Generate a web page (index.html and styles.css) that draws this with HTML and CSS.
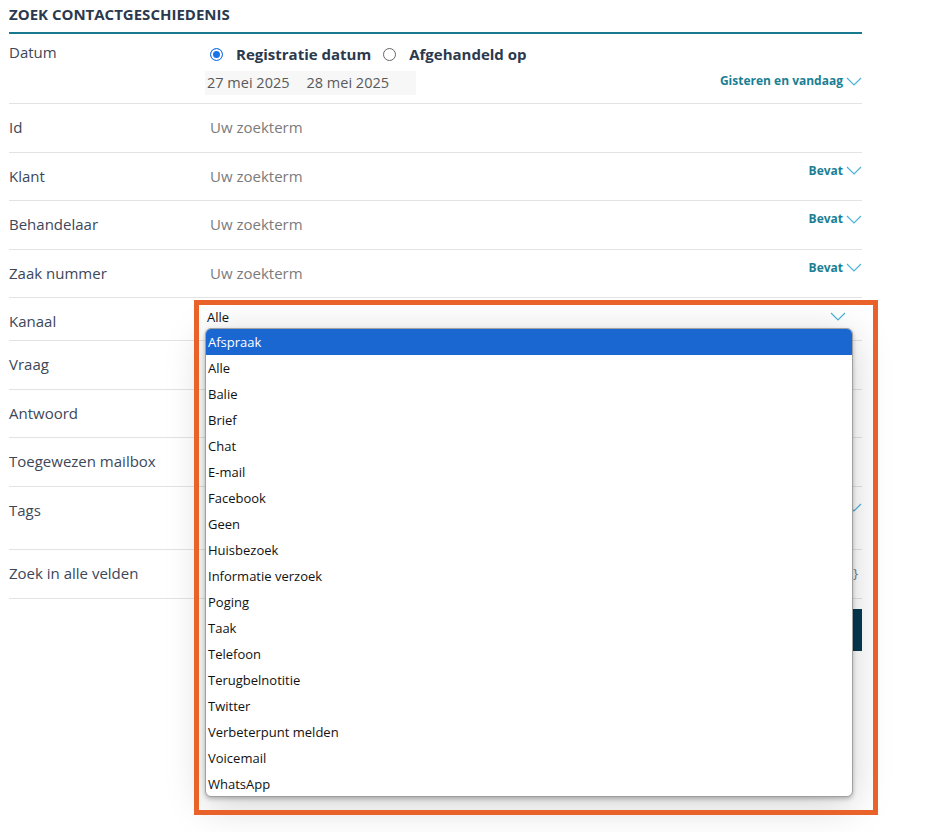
FILE: index.html
```html
<!DOCTYPE html>
<html lang="nl">
<head>
  <meta charset="UTF-8" />
  <title>Zoek contactgeschiedenis</title>
  <link rel="stylesheet" href="styles.css">
</head>
<body>

  <div class="panel">
    <h2 class="title">Zoek contactgeschiedenis</h2>

    <!-- Datum -->
    <div class="row row-date">
      <div class="label">Datum</div>
      <div class="field">
        <div class="radios">
          <label class="radio"><span class="dot checked"></span>Registratie datum</label>
          <label class="radio"><span class="dot"></span>Afgehandeld op</label>
        </div>
        <div class="dates-line">
          <div class="dates"><span>27 mei 2025</span><span>28 mei 2025</span></div>
          <div class="mode">Gisteren en vandaag
            <svg class="chev" viewBox="0 0 16 9"><polyline points="1,1 8,8 15,1" /></svg>
          </div>
        </div>
      </div>
    </div>

    <div class="row">
      <div class="label">Id</div>
      <div class="field"><span class="ph">Uw zoekterm</span></div>
    </div>

    <div class="row">
      <div class="label">Klant</div>
      <div class="field"><span class="ph">Uw zoekterm</span>
        <div class="mode mode-up">Bevat <svg class="chev" viewBox="0 0 16 9"><polyline points="1,1 8,8 15,1" /></svg></div>
      </div>
    </div>

    <div class="row">
      <div class="label">Behandelaar</div>
      <div class="field"><span class="ph">Uw zoekterm</span>
        <div class="mode mode-up">Bevat <svg class="chev" viewBox="0 0 16 9"><polyline points="1,1 8,8 15,1" /></svg></div>
      </div>
    </div>

    <div class="row">
      <div class="label">Zaak nummer</div>
      <div class="field"><span class="ph">Uw zoekterm</span>
        <div class="mode mode-up">Bevat <svg class="chev" viewBox="0 0 16 9"><polyline points="1,1 8,8 15,1" /></svg></div>
      </div>
    </div>

    <!-- Kanaal, select is open -->
    <div class="row row-kanaal">
      <div class="label">Kanaal</div>
      <div class="field">
        <div class="select">
          <span>Alle</span>
          <svg class="chev" viewBox="0 0 16 9"><polyline points="1,1 8,8 15,1" /></svg>
        </div>
      </div>
    </div>

    <div class="row">
      <div class="label">Vraag</div>
      <div class="field"></div>
    </div>

    <div class="row">
      <div class="label">Antwoord</div>
      <div class="field"></div>
    </div>

    <div class="row">
      <div class="label">Toegewezen mailbox</div>
      <div class="field"></div>
    </div>

    <div class="row row-tags">
      <div class="label">Tags</div>
      <div class="field">
        <div class="mode">Bevat <svg class="chev" viewBox="0 0 16 9"><polyline points="1,1 8,8 15,1" /></svg></div>
      </div>
    </div>

    <div class="row">
      <div class="label">Zoek in alle velden</div>
      <div class="field"><span class="braces">{}</span></div>
    </div>

    <div class="actions">
      <button type="button">Zoeken</button>
    </div>
  </div>

  <!-- opened option list of Kanaal -->
  <div class="options">
    <div class="opt active">Afspraak</div>
    <div class="opt">Alle</div>
    <div class="opt">Balie</div>
    <div class="opt">Brief</div>
    <div class="opt">Chat</div>
    <div class="opt">E-mail</div>
    <div class="opt">Facebook</div>
    <div class="opt">Geen</div>
    <div class="opt">Huisbezoek</div>
    <div class="opt">Informatie verzoek</div>
    <div class="opt">Poging</div>
    <div class="opt">Taak</div>
    <div class="opt">Telefoon</div>
    <div class="opt">Terugbelnotitie</div>
    <div class="opt">Twitter</div>
    <div class="opt">Verbeterpunt melden</div>
    <div class="opt">Voicemail</div>
    <div class="opt">WhatsApp</div>
  </div>

  <!-- highlight frame -->
  <div class="highlight"></div>

</body>
</html>
```

FILE: styles.css
```css
html, body {
  min-height: 832px;
}

body {
  margin: 0;
  font-family: "Open Sans", "Liberation Sans", sans-serif;
  color: #3d4759;
  background: #fff;
}

.panel {
  width: 853px;
  margin-left: 9px;
}

.title {
  margin: 0;
  padding: 4px 0 8px;
  font-size: 15px;
  line-height: 20px;
  font-weight: 700;
  text-transform: uppercase;
  color: #2b394e;
  border-bottom: 2px solid #17798d;
}

.row {
  display: grid;
  grid-template-columns: 196px 1fr;
  padding: 13px 0 14.5px;
  border-bottom: 1px solid #e3e3e3;
  font-size: 15px;
  line-height: 20px;
}

.label {
  color: #3d4759;
}

.field {
  display: flex;
  justify-content: space-between;
  align-items: flex-start;
}

.ph {
  padding-left: 5px;
  color: #7b7b7b;
}

/* Datum */
.row-date {
  padding: 8px 0 8px;
}

.row-date .field {
  flex-direction: column;
  align-items: stretch;
}

.radios {
  display: flex;
  height: 24px;
  align-items: center;
  padding-left: 5px;
}

.radio {
  display: flex;
  align-items: center;
  font-weight: 700;
  color: #2b394e;
  margin-right: 12px;
}

.dot {
  width: 11px;
  height: 11px;
  border: 1px solid #666;
  border-radius: 50%;
  margin-right: 13px;
}

.dot.checked {
  border-color: #1a73e8;
  background: #1a73e8;
  box-shadow: inset 0 0 0 2px #fff;
}

.dates-line {
  margin-top: 5px;
  display: flex;
  justify-content: space-between;
  align-items: center;
}

.dates {
  background: #f7f7f7;
  height: 24px;
  width: 211px;
  display: flex;
  align-items: center;
  padding-left: 2px;
  box-sizing: border-box;
  color: #5a5a5a;
  font-size: 14.5px;
}

.dates span {
  margin-right: 17px;
}

.mode {
  font-size: 12px;
  font-weight: 700;
  color: #1a7f94;
  display: flex;
  align-items: center;
  line-height: 16px;
}

.row-date .mode {
  margin-top: -4px;
}

.mode-up {
  margin-top: -3px;
}

.chev {
  width: 16px;
  height: 9px;
  margin-left: 3px;
  fill: none;
  stroke: #4ab3d6;
  stroke-width: 1.2;
}

/* Kanaal */
.row-kanaal {
  padding: 13px 0 9px;
}

.select {
  flex: 1;
  display: flex;
  justify-content: space-between;
  align-items: center;
  margin-top: -6px;
  height: 24px;
  padding: 0 16px 0 2px;
  font-size: 13px;
  color: #111;
}

.select .chev {
  margin-top: -2px;
}

.options {
  position: absolute;
  top: 328px;
  left: 205px;
  width: 648px;
  height: 469px;
  box-sizing: border-box;
  background: #fff;
  border: 1px solid #a0a0a0;
  border-radius: 6px;
  overflow: hidden;
  box-shadow: 0 2px 4px rgba(0, 0, 0, 0.25), 0 8px 40px rgba(0, 0, 0, 0.18);
}

.opt {
  height: 26px;
  line-height: 26px;
  padding-left: 2px;
  font-size: 13px;
  color: #111;
}

.opt.active {
  background: #1a67d2;
  color: #fff;
}

.row-tags {
  min-height: 35px;
}

.row-tags .mode {
  margin-left: auto;
}

.braces {
  margin-left: auto;
  color: #777;
  font-size: 13px;
  margin-right: 4px;
}

.actions {
  display: flex;
  justify-content: flex-end;
  margin-top: 10px;
}

button {
  height: 42px;
  padding: 0 28px;
  background: #073a51;
  color: #fff;
  border: none;
  font-family: inherit;
  font-size: 15px;
  font-weight: 700;
}

.highlight {
  position: absolute;
  left: 194px;
  top: 300px;
  width: 684px;
  height: 515px;
  box-sizing: border-box;
  border: 5px solid #e8622a;
}
```
